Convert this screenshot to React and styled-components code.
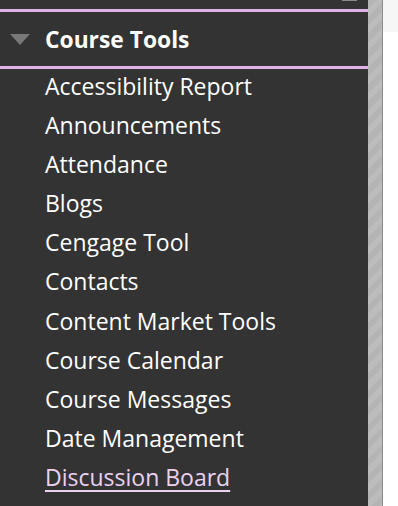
import styled, { createGlobalStyle } from "styled-components";

const GlobalStyle = createGlobalStyle`
  html, body {
    margin: 0;
    padding: 0;
    background: #ffffff;
  }
  body {
    font-family: "Open Sans", "Liberation Sans", sans-serif;
  }
`;

const Page = styled.div`
  display: flex;
  width: 398px;
  height: 506px;
  overflow: hidden;
`;

const Panel = styled.nav`
  width: 368px;
  flex-shrink: 0;
  background: #333333;
  position: relative;
  padding-top: 9px;
`;

const TopTab = styled.div`
  position: absolute;
  top: 0;
  left: 342px;
  width: 15px;
  height: 1px;
  background: #8a8a8a;
`;

const Divider = styled.div`
  height: 3px;
  background: #dfb2e8;
`;

const Header = styled.div`
  display: flex;
  align-items: center;
  height: 54px;
  color: #ffffff;
  font-weight: 700;
  font-size: 22.8px;
`;

const Arrow = styled.span`
  width: 45px;
  display: flex;
  justify-content: center;
  padding-right: 6px;
  box-sizing: border-box;

  &::before {
    content: "";
    border-left: 10px solid transparent;
    border-right: 10px solid transparent;
    border-top: 11px solid #787878;
  }
`;

const List = styled.ul`
  list-style: none;
  margin: 0;
  padding: 0 0 0 45px;
`;

const Item = styled.li`
  height: 39.1px;
  line-height: 34px;
  font-size: 23px;
  color: ${(p) => (p.$active ? "#ead2f0" : "#ffffff")};
  text-decoration: ${(p) => (p.$active ? "underline" : "none")};
  text-decoration-thickness: 2px;
  text-underline-offset: 4px;
  white-space: nowrap;
`;

const Gutter = styled.div`
  width: 14px;
  flex-shrink: 0;
  background: repeating-linear-gradient(
    135deg,
    #b4b4b4 0px,
    #b4b4b4 6px,
    #bcbcbc 6px,
    #bcbcbc 12px
  );
  border-right: 1px solid #8c8c8c;
`;

const Side = styled.div`
  flex: 1;
  background: #ffffff;
`;

const SideTop = styled.div`
  height: 32px;
  background: #f6f6f6;
`;

const tools = [
  "Accessibility Report",
  "Announcements",
  "Attendance",
  "Blogs",
  "Cengage Tool",
  "Contacts",
  "Content Market Tools",
  "Course Calendar",
  "Course Messages",
  "Date Management",
  "Discussion Board",
];

export default function App() {
  return (
    <>
      <GlobalStyle />
      <Page>
        <Panel>
          <TopTab />
          <Divider />
          <Header>
            <Arrow />
            Course Tools
          </Header>
          <Divider />
          <List>
            {tools.map((t) => (
              <Item key={t} $active={t === "Discussion Board"}>
                {t}
              </Item>
            ))}
          </List>
        </Panel>
        <Gutter />
        <Side>
          <SideTop />
        </Side>
      </Page>
    </>
  );
}
